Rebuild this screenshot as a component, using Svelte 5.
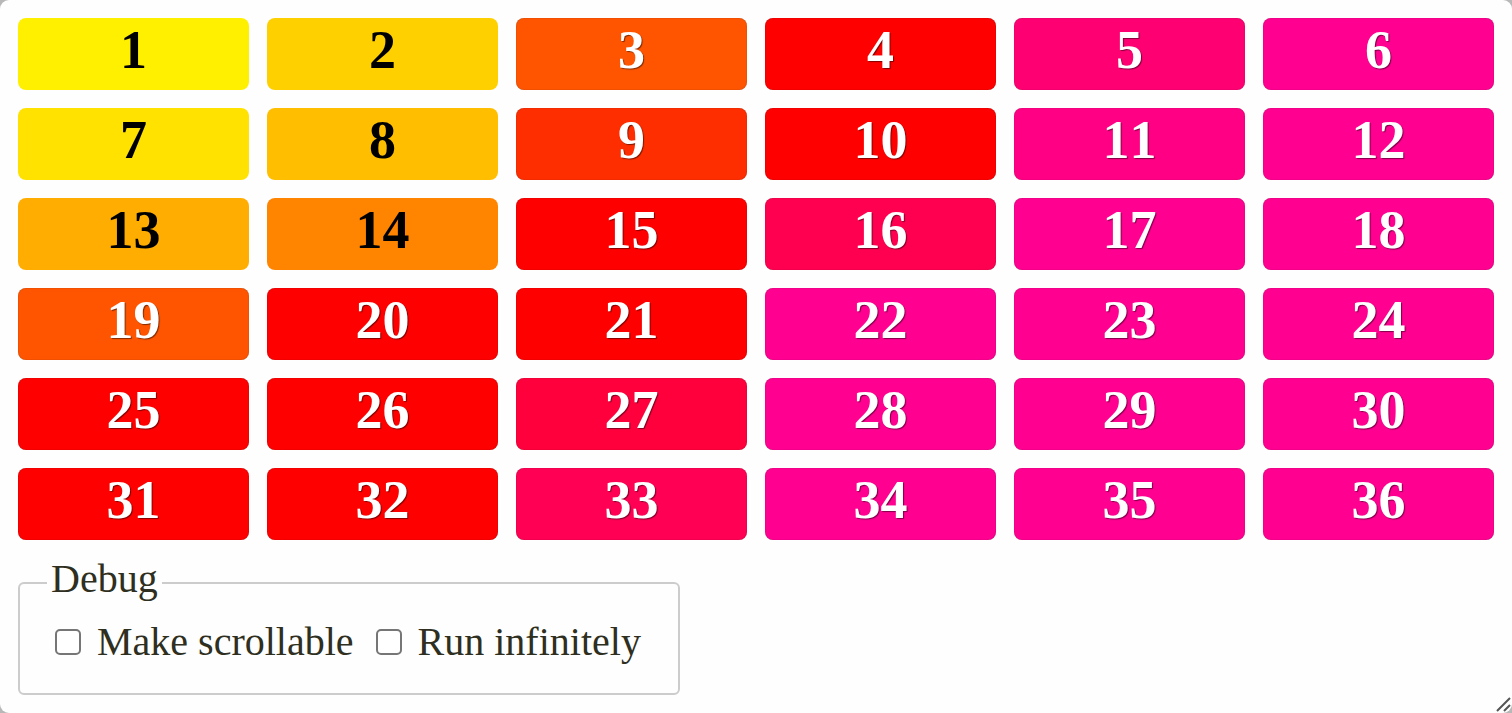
<script>
  const colors = [
    '#fff000', '#ffd000', '#ff5500', '#ff0000', '#ff0073', '#ff0091',
    '#ffe200', '#ffbf00', '#ff2e00', '#ff0000', '#ff0084', '#ff0091',
    '#ffad00', '#ff8400', '#ff0000', '#ff0050', '#ff0091', '#ff0091',
    '#ff5500', '#ff0000', '#ff0000', '#ff0091', '#ff0091', '#ff0091',
    '#ff0000', '#ff0000', '#ff003c', '#ff0091', '#ff0091', '#ff0091',
    '#ff0000', '#ff0000', '#ff0055', '#ff0091', '#ff0091', '#ff0091'
  ];
  const darkText = new Set([1, 2, 7, 8, 13, 14]);
  const cells = colors.map((color, i) => ({ n: i + 1, color, dark: darkText.has(i + 1) }));

  let scrollable = $state(false);
  let infinite = $state(false);
</script>

<main class="panel">
  <div class="grid">
    {#each cells as cell (cell.n)}
      <div class="cell" class:dark={cell.dark} style:background-color={cell.color}>{cell.n}</div>
    {/each}
  </div>

  <fieldset>
    <legend>Debug</legend>
    <div class="options">
      <label><input type="checkbox" bind:checked={scrollable} />Make scrollable</label>
      <label><input type="checkbox" bind:checked={infinite} />Run infinitely</label>
    </div>
  </fieldset>

  <svg class="grip" width="18" height="18" viewBox="0 0 18 18" aria-hidden="true">
    <path d="M3 16 16 3M10 16 16 10" fill="none" stroke="#555" stroke-width="2" />
  </svg>
</main>

<style>
  :global(body) {
    background: #b8b8b8;
  }
  .panel {
    position: relative;
    box-sizing: border-box;
    min-height: 100vh;
    padding: 18px;
    border-radius: 9px;
    background: #fefefe;
    color: #2e2f20;
    font-family: "Liberation Serif", serif;
    font-size: 40px;
    line-height: 48px;
  }
  .grid {
    display: grid;
    grid-template-columns: repeat(6, 1fr);
    gap: 18px;
  }
  .cell {
    padding-bottom: 8px;
    border-radius: 8px;
    box-shadow: inset 0 0 1px rgba(0, 0, 0, 0.5);
    color: #fff;
    font-size: 54px;
    font-weight: 700;
    font-kerning: none;
    line-height: 64px;
    text-align: center;
    text-shadow: 1px 1px 1px rgba(0, 0, 0, 0.5);
  }
  .cell.dark {
    box-shadow: none;
    color: #000;
    text-shadow: none;
  }
  fieldset {
    box-sizing: border-box;
    width: fit-content;
    min-width: 662px;
    margin: 15px 0 0;
    padding: 7px 27px 27px;
    border: 2px solid #ccc;
    border-radius: 6px;
  }
  legend {
    padding: 0 4px 8px;
  }
  .options {
    display: flex;
    gap: 14px;
  }
  label {
    display: flex;
    align-items: center;
    gap: 16px;
  }
  input {
    appearance: none;
    box-sizing: border-box;
    width: 26px;
    height: 26px;
    margin: 0 0 0 8px;
    border: 2px solid #767676;
    border-radius: 5px;
    background: #fff;
  }
  input:checked {
    border-color: #0075ff;
    background: #0075ff;
  }
  .grip {
    position: absolute;
    right: 0;
    bottom: 0;
  }
</style>
